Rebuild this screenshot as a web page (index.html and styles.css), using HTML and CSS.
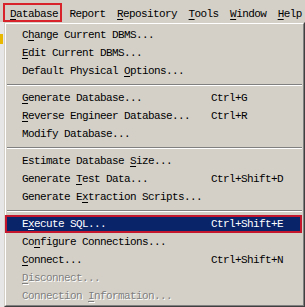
FILE: index.html
```html
<!DOCTYPE html>
<html lang="en">
<head>
  <meta charset="UTF-8" />
  <title>Database Menu</title>
  <link rel="stylesheet" href="styles.css">
</head>
<body>
  <div class="menubar">
    <div class="menu-title active"><u>D</u>atabase</div>
    <div class="menu-title">Report</div>
    <div class="menu-title"><u>R</u>epository</div>
    <div class="menu-title"><u>T</u>ools</div>
    <div class="menu-title"><u>W</u>indow</div>
    <div class="menu-title"><u>H</u>elp</div>
  </div>

  <div class="below">
    <div class="backdrop">
      <div class="app-icon"></div>
    </div>
    <div class="dropdown">
      <div class="dropdown-inner">
        <div class="item"><span class="label">C<u>h</u>ange Current DBMS...</span></div>
        <div class="item"><span class="label"><u>E</u>dit Current DBMS...</span></div>
        <div class="item"><span class="label">Default Physical <u>O</u>ptions...</span></div>
        <div class="separator"></div>
        <div class="item"><span class="label"><u>G</u>enerate Database...</span><span class="shortcut">Ctrl+G</span></div>
        <div class="item"><span class="label"><u>R</u>everse Engineer Database...</span><span class="shortcut">Ctrl+R</span></div>
        <div class="item"><span class="label">Modify Database...</span></div>
        <div class="separator"></div>
        <div class="item"><span class="label">Estimate Database <u>S</u>ize...</span></div>
        <div class="item"><span class="label">Generate <u>T</u>est Data...</span><span class="shortcut">Ctrl+Shift+D</span></div>
        <div class="item"><span class="label">Generate E<u>x</u>traction Scripts...</span></div>
        <div class="separator"></div>
        <div class="item selected"><span class="label">E<u>x</u>ecute SQL...</span><span class="shortcut">Ctrl+Shift+E</span></div>
        <div class="item"><span class="label">Co<u>n</u>figure Connections...</span></div>
        <div class="item"><span class="label"><u>C</u>onnect...</span><span class="shortcut">Ctrl+Shift+N</span></div>
        <div class="item disabled"><span class="label"><u>D</u>isconnect...</span></div>
        <div class="item disabled"><span class="label">Connection <u>I</u>nformation...</span></div>
      </div>
    </div>
  </div>
</body>
</html>
```

FILE: styles.css
```css
body {
  margin: 0;
  width: 305px;
  height: 307px;
  overflow: hidden;
  background: #d4d0c8;
  font-family: "Liberation Mono", monospace;
  font-size: 11px;
  letter-spacing: -0.6px;
  color: #000;
}
u {
  text-decoration: underline;
  text-underline-offset: 2px;
}
.menubar {
  display: flex;
  height: 22px;
  padding-left: 4.25px;
  background: #d4d0c8;
}
.menu-title {
  position: relative;
  padding: 6px 5.75px 0;
  line-height: 16px;
  white-space: nowrap;
}
.menu-title.active::after {
  content: "";
  position: absolute;
  top: 3px;
  bottom: 0;
  left: -1.25px;
  right: 1.75px;
  border: 2px solid #d8232a;
}
.below {
  display: flex;
}
.backdrop {
  width: 4px;
  background: #e6e6e6;
  padding-top: 12px;
}
.app-icon {
  width: 3px;
  height: 10px;
  background: #e8b800;
}
.dropdown {
  flex: 1;
  border: 1px solid;
  border-color: #d4d0c8 #404040 #404040 #d4d0c8;
}
.dropdown-inner {
  border: 1px solid;
  border-color: #fff #808080 #808080 #fff;
  padding: 2px 0 0;
}
.item {
  display: flex;
  height: 18px;
  line-height: 18px;
  padding-left: 16px;
  white-space: nowrap;
}
.label {
  flex: 0 0 189px;
}
.separator {
  height: 9px;
  margin: 0 1px;
  display: flex;
  flex-direction: column;
  justify-content: center;
}
.separator::before {
  content: "";
  height: 1px;
  background: #808080;
  border-bottom: 1px solid #fff;
}
.selected {
  background: #0a246a;
  color: #fff;
  margin: 0 1px 0 -1px;
  padding-left: 17px;
  box-shadow: inset 0 0 0 2px #c4162c;
}
.disabled {
  color: #808080;
  text-shadow: 1px 1px 0 #fff;
}
```
